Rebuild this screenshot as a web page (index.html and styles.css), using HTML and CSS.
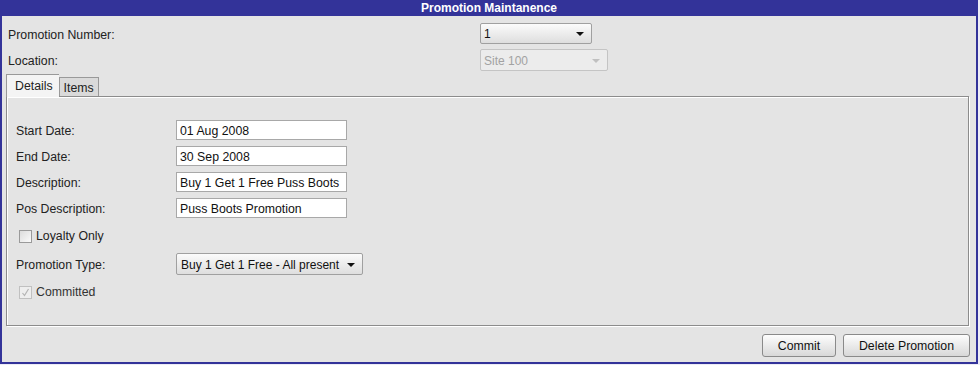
FILE: index.html
```html
<!DOCTYPE html>
<html lang="en">
<head>
    <meta charset="UTF-8">
    <title>Promotion Maintanence</title>
    <link rel="stylesheet" href="styles.css">
</head>
<body>
    <div class="window">
        <div class="title">Promotion Maintanence</div>

        <div class="header">
            <label>Promotion Number:</label>
            <div class="combo combo-number">
                <span>1</span>
                <span class="arrow"></span>
            </div>
            <label>Location:</label>
            <div class="combo combo-location disabled">
                <span>Site 100</span>
                <span class="arrow"></span>
            </div>
        </div>

        <div class="tabs">
            <span class="tab active">Details</span>
            <span class="tab">Items</span>
        </div>

        <div class="panel">
            <div class="form">
                <label>Start Date:</label>
                <input type="text" class="field" value="01 Aug 2008">
                <label>End Date:</label>
                <input type="text" class="field" value="30 Sep 2008">
                <label>Description:</label>
                <input type="text" class="field" value="Buy 1 Get 1 Free Puss Boots">
                <label>Pos Description:</label>
                <input type="text" class="field" value="Puss Boots Promotion">
            </div>

            <div class="check check-loyalty">
                <span class="box"></span>
                <span>Loyalty Only</span>
            </div>

            <div class="form form-type">
                <label>Promotion Type:</label>
                <div class="combo combo-type">
                    <span>Buy 1 Get 1 Free - All present</span>
                    <span class="arrow"></span>
                </div>
            </div>

            <div class="check check-committed">
                <span class="box checked">
                    <svg width="9" height="9" viewBox="0 0 9 9"><path d="M1.5 5 L3.5 7.5 L7.5 1" fill="none" stroke="#b4b4b4" stroke-width="1.2"/></svg>
                </span>
                <span>Committed</span>
            </div>
        </div>

        <div class="actions">
            <button class="btn btn-commit">Commit</button>
            <button class="btn btn-delete">Delete Promotion</button>
        </div>
    </div>
</body>
</html>
```

FILE: styles.css
```css
body {
    margin: 0;
    background-color: #ececf6;
    font-family: 'Liberation Sans', Arial, sans-serif;
    font-size: 12.3px;
    color: #222;
}
.window {
    width: 974px;
    height: 362px;
    border: 2px solid #333399;
    border-top: none;
    background-color: #e4e4e4;
}
.title {
    height: 16px;
    line-height: 16px;
    background-color: #333399;
    color: white;
    font-size: 12px;
    font-weight: bold;
    text-align: center;
}
.header {
    display: grid;
    grid-template-columns: 472px auto;
    grid-template-rows: 21px 22px;
    row-gap: 5px;
    align-items: center;
    padding: 7px 0 0 6px;
}
.header label,
.form label {
    padding-top: 2px;
}
.combo {
    display: flex;
    align-items: center;
    justify-content: space-between;
    box-sizing: border-box;
    height: 100%;
    padding: 1px 7px 0 3px;
    border: 1px solid #a0a0a0;
    border-radius: 2px;
    background: linear-gradient(#fbfbfb, #dedede);
    font-size: 12px;
    color: #111;
}
.combo-number {
    width: 112px;
}
.combo-location {
    width: 128px;
}
.arrow {
    width: 0;
    height: 0;
    border-left: 4px solid transparent;
    border-right: 4px solid transparent;
    border-top: 4px solid #111;
}
.disabled {
    background: #ececec;
    border-color: #c4c4c4;
    color: #a2a2a2;
}
.disabled .arrow {
    border-top-color: #c0c0c0;
}
.tabs {
    display: flex;
    align-items: flex-end;
    height: 22px;
    margin: 3px 0 0 4px;
    position: relative;
    z-index: 1;
}
.tab {
    box-sizing: border-box;
    height: 19px;
    padding: 3px 4px 0;
    border: 1px solid #999;
    border-bottom: none;
    background-color: #dadada;
}
.tab.active {
    height: 23px;
    margin-bottom: -1px;
    padding: 4px 6px 0 8px;
    background-color: #f4f4f4;
    border-right: none;
}
.panel {
    box-sizing: border-box;
    height: 230px;
    margin: 0 7px 0 4px;
    border: 1px solid #8c8c8c;
    box-shadow: inset 1px 1px 0 #fff, 1px 1px 0 #fff;
    padding: 23px 0 0 9px;
}
.form {
    display: grid;
    grid-template-columns: 160px 171px;
    grid-auto-rows: 20px;
    row-gap: 6px;
    align-items: center;
}
.field {
    box-sizing: border-box;
    width: 171px;
    height: 20px;
    margin: 0;
    padding: 1px 3px 0;
    border: 1px solid #a8a8a8;
    background-color: white;
    font-family: inherit;
    font-size: 12.3px;
    color: #111;
}
.check {
    display: flex;
    align-items: center;
    gap: 4px;
    padding-left: 3px;
}
.check-loyalty {
    margin-top: 11px;
}
.check-committed {
    margin-top: 10px;
}
.box {
    display: flex;
    align-items: center;
    justify-content: center;
    box-sizing: border-box;
    width: 13px;
    height: 13px;
    border: 1px solid #9a9a9a;
    background: linear-gradient(135deg, #dcdcdc, #fafafa);
}
.box.checked {
    border-color: #c0c0c0;
    background: #eeeeee;
}
.check-committed span:last-child {
    color: #333;
}
.form-type {
    grid-template-columns: 160px 187px;
    grid-auto-rows: 22px;
    margin-top: 10px;
}
.combo-type {
    width: 187px;
    padding-left: 4px;
}
.actions {
    display: flex;
    justify-content: flex-end;
    gap: 7px;
    padding: 8px 6px 0 0;
}
.btn {
    box-sizing: border-box;
    height: 23px;
    padding: 1px 0 0;
    border: 1px solid #8a8a8a;
    border-radius: 3px;
    background: linear-gradient(#fdfdfd, #d8d8d8);
    font-family: inherit;
    font-size: 12.3px;
    color: #111;
}
.btn-commit {
    width: 74px;
}
.btn-delete {
    width: 127px;
}
```
